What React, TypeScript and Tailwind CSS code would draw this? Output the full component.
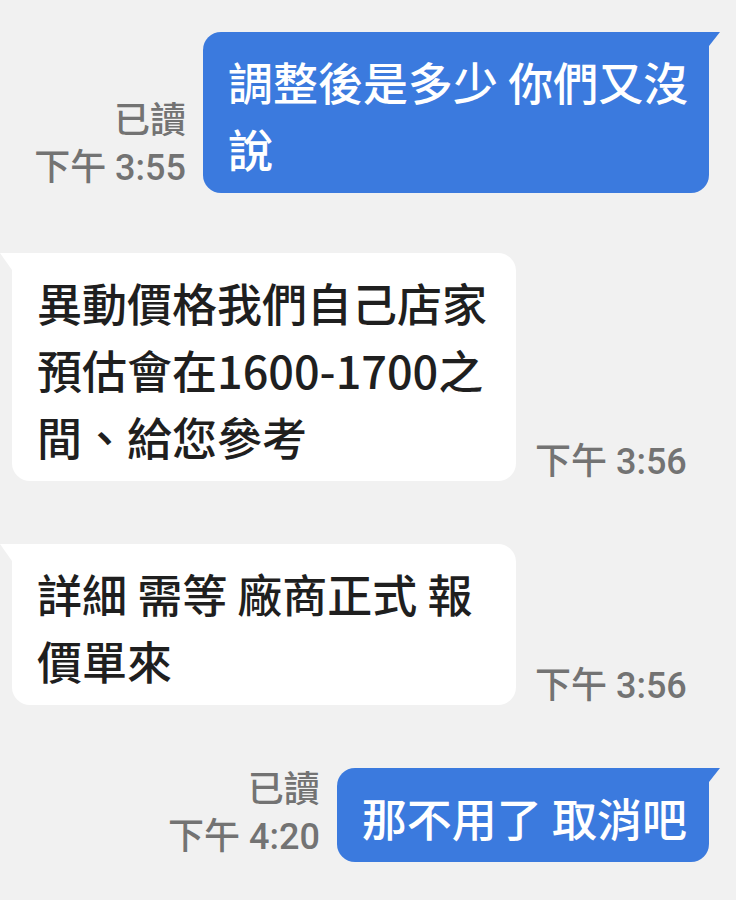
import React from 'react'

const cjk = { fontFamily: '"Noto Sans CJK TC", "Noto Sans", sans-serif' }
const meta = { fontFamily: 'Roboto, "Noto Sans CJK TC", sans-serif' }

function ReadInfo({ time }: { time: string }) {
  return (
    <div
      className="mr-[17px] mb-[1px] flex flex-col items-end text-[36px] font-medium leading-[47px] text-[#737373]"
      style={meta}
    >
      <span>已讀</span>
      <span>{time}</span>
    </div>
  )
}

function Sent({ lines, time, wide, className = '' }: { lines: string[]; time: string; wide?: boolean; className?: string }) {
  return (
    <div className={`flex items-end justify-end pr-[27px] ${className}`}>
      <ReadInfo time={time} />
      <div
        className={`relative rounded-[18px] rounded-tr-none bg-[#3b7ade] pl-[25px] pr-[22px] pt-[16px] pb-[11px] text-[45px] font-medium leading-[67px] text-white ${
          wide ? 'w-[506px]' : ''
        }`}
        style={cjk}
      >
        {lines.map((l) => (
          <div key={l} className="whitespace-nowrap">
            {l}
          </div>
        ))}
        <svg className="absolute -right-[11px] top-0" width="11" height="14" viewBox="0 0 11 14">
          <path d="M0 0 L11 0 L0 14 Z" fill="#3b7ade" />
        </svg>
      </div>
    </div>
  )
}

function Received({ lines, time, className = '' }: { lines: string[]; time: string; className?: string }) {
  return (
    <div className={`flex items-end pl-[12px] ${className}`}>
      <div
        className="relative w-[504px] rounded-[18px] rounded-tl-none bg-white pl-[25px] pr-[22px] pt-[16px] pb-[11px] text-[45px] font-medium leading-[67px] text-[#1f1f1f]"
        style={cjk}
      >
        {lines.map((l) => (
          <div key={l} className="whitespace-nowrap">
            {l}
          </div>
        ))}
        <svg className="absolute -left-[12px] top-0" width="12" height="17" viewBox="0 0 12 17">
          <path d="M12 0 L0 0 L12 17 Z" fill="#ffffff" />
        </svg>
      </div>
      <span className="ml-[19px] text-[36px] font-medium leading-[38px] text-[#737373]" style={meta}>
        {time}
      </span>
    </div>
  )
}

export default function App() {
  return (
    <div className="flex min-h-[900px] w-[736px] flex-col bg-[#f1f1f1] pt-[32px]">
      <Sent lines={['調整後是多少 你們又沒', '說']} time="下午 3:55" wide />
      <Received
        className="mt-[60px]"
        lines={['異動價格我們自己店家', '預估會在1600-1700之', '間、給您參考']}
        time="下午 3:56"
      />
      <Received className="mt-[63px]" lines={['詳細 需等 廠商正式 報', '價單來']} time="下午 3:56" />
      <Sent className="mt-[62px]" lines={['那不用了 取消吧']} time="下午 4:20" />
    </div>
  )
}
